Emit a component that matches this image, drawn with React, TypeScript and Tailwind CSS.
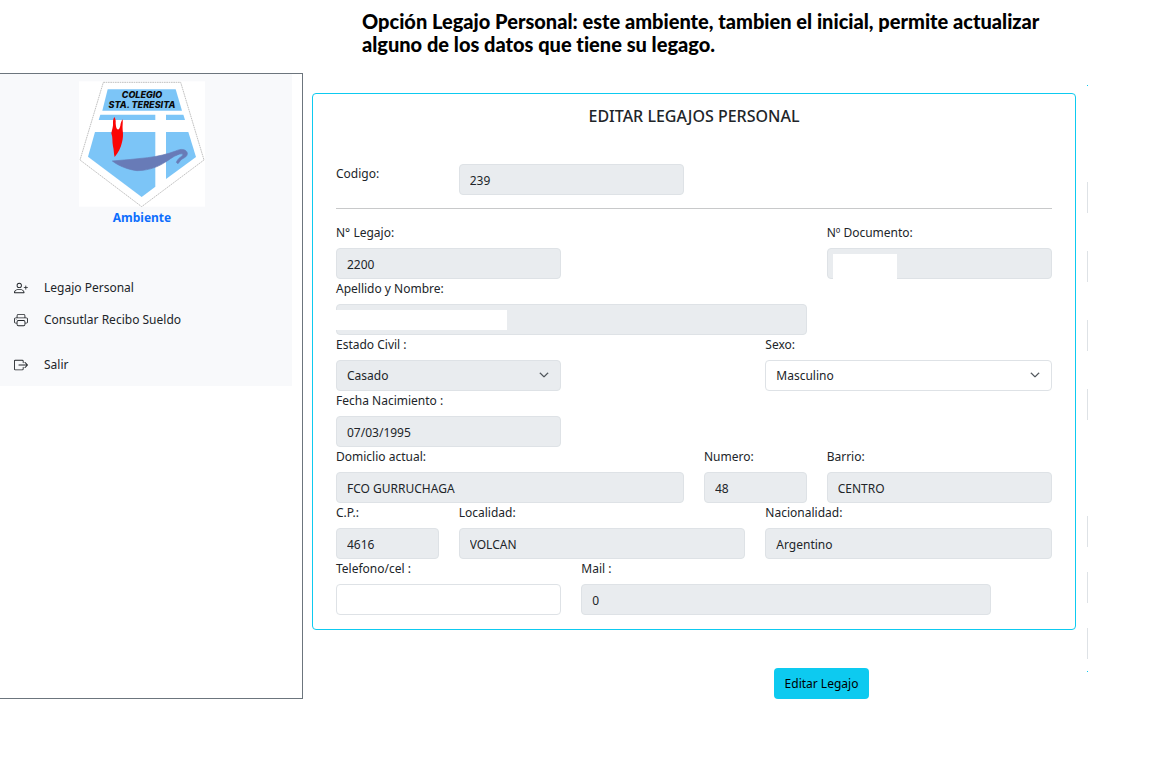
import type { ReactNode } from "react";
import { BsBoxArrowRight, BsChevronDown, BsPersonPlus, BsPrinter } from "react-icons/bs";

const boxClass = "block h-[31px] w-full appearance-none rounded border border-[#dee2e6] px-2.5 pt-px text-[#212529] outline-none";

function Logo() {
    return (
        <svg viewBox="27 34 378 376" className="h-[126px] w-[126px]" role="img" aria-label="Colegio Sta. Teresita">
            <rect x="27" y="34" width="378" height="376" fill="#fff" />
            <path d="M100 37H332L402 270L215 410L30 270Z" fill="#fff" stroke="#b5b5b5" strokeWidth="2.5" strokeDasharray="5 2" />
            <g fill="#7cc5f7">
                <path d="M113 58H317L336 122H97Z" />
                <path d="M91 134H256V150H86Z" />
                <path d="M288 134H340L345 150H288Z" />
                <path d="M75 186H256V350L215 381L54 260Z" />
                <path d="M288 186H355L378 261L288 327Z" />
            </g>
            <path d="M133 141C136 146 138 152 137 160C138 168 138 174 142 178C147 180 149 174 151 167C152 160 154 153 158 148C159 158 157 168 158 180C160 193 159 207 156 217C153 234 144 249 134 261C131 252 132 239 129 229C126 215 129 203 124 190C126 177 130 170 129 158C129 151 130 146 133 141Z" fill="#fb0505" />
            <path d="M127 273C163 270 198 267 233 263C264 259 291 253 317 243C332 236 348 236 352 249C353 263 337 264 331 272L324 281L319 277C323 267 329 263 337 257C342 251 333 250 324 254C309 259 297 270 280 280C256 295 225 302 201 302C175 299 146 288 127 273Z" fill="#687bb7" stroke="#687bb7" strokeWidth="2" />
            <g fill="#0a0a0a" className="font-['Inter',sans-serif] font-extrabold italic" textAnchor="middle" fontSize="27">
                <text x="216" y="84">COLEGIO</text>
                <text x="216" y="115">STA. TERESITA</text>
            </g>
        </svg>
    );
}

function MenuLink({ icon, children }: { icon: ReactNode; children: ReactNode }) {
    return (
        <a href="#" className="flex h-8 items-center gap-4 pl-3.5 text-[#212529]">
            {icon}
            {children}
        </a>
    );
}

type FieldProps = {
    id: string;
    label: string;
    className: string;
    value?: string;
    editable?: boolean;
    cover?: ReactNode;
};

function Field({ id, label, className, value = "", editable = false, cover }: FieldProps) {
    return (
        <div className={className}>
            <label htmlFor={id} className="block h-[25px] leading-5">{label}</label>
            <div className="relative">
                <input
                    id={id}
                    type="text"
                    defaultValue={value}
                    readOnly={!editable}
                    className={`${boxClass} ${editable ? "bg-white" : "bg-[#e9ecef]"}`}
                />
                {cover}
            </div>
        </div>
    );
}

function SelectField({ id, label, className, value, editable = false }: FieldProps) {
    return (
        <div className={className}>
            <label htmlFor={id} className="block h-[25px] leading-5">{label}</label>
            <div className="relative">
                <select
                    id={id}
                    disabled={!editable}
                    className={`${boxClass} opacity-100 ${editable ? "bg-white" : "bg-[#e9ecef]"}`}
                >
                    <option>{value}</option>
                </select>
                <BsChevronDown className="pointer-events-none absolute top-2.5 right-3 h-2.5 w-2.5 stroke-1 text-[#343a40]" />
            </div>
        </div>
    );
}

export default function App() {
    return (
        <div className="min-h-screen bg-white pb-16 font-['Noto_Sans','Open_Sans',sans-serif] text-[12px] text-[#212529]">
            <header className="h-[73px] pt-2.5 pl-[362px]">
                <p className="max-w-[700px] font-['Lato',sans-serif] text-[20px] leading-[23px] font-black text-black [font-variant-ligatures:none]">
                    Opción Legajo Personal: este ambiente, tambien el inicial, permite actualizar alguno de los datos que tiene su legago.
                </p>
            </header>

            <div className="flex items-stretch">
                <aside className="w-[303px] shrink-0 border-y border-r border-[#6c757d]">
                    <div className="mr-2.5 bg-[#f8f9fb] pt-[7px] pb-[5px]">
                        <div className="flex flex-col items-center pr-2">
                            <Logo />
                            <h2 className="pt-px leading-5 font-bold text-[#0d6efd]">Ambiente</h2>
                        </div>
                        <nav className="pt-11">
                            <MenuLink icon={<BsPersonPlus className="h-3.5 w-3.5" />}>Legajo Personal</MenuLink>
                            <MenuLink icon={<BsPrinter className="h-3.5 w-3.5" />}>Consutlar Recibo Sueldo</MenuLink>
                            <div className="pt-[13px]">
                                <MenuLink icon={<BsBoxArrowRight className="h-3.5 w-3.5" />}>Salir</MenuLink>
                            </div>
                        </nav>
                    </div>
                </aside>

                <main className="flex flex-1 pt-3 pr-[82px] pl-[9px]">
                    <form className="flex-1 pt-2" onSubmit={(e) => e.preventDefault()}>
                        <section className="rounded border border-[#0dcaf0] px-[23px] pt-3 pb-3.5">
                            <h1 className="text-center text-[16px] leading-5 font-medium">EDITAR LEGAJOS PERSONAL</h1>

                            <div className="mt-[38px] grid grid-cols-12 gap-x-5">
                                <label htmlFor="codigo" className="col-span-2 leading-5">Codigo:</label>
                                <input id="codigo" type="text" readOnly defaultValue="239" className={`${boxClass} col-span-4 bg-[#e9ecef]`} />
                            </div>

                            <hr className="mt-[13px] mb-3.5 border-[#c8c9ca]" />

                            <div className="grid grid-cols-12 gap-x-5">
                                <Field id="legajo" label="N° Legajo:" value="2200" className="col-span-4" />
                                <Field
                                    id="documento"
                                    label="Nº Documento:"
                                    className="col-span-4 col-start-9"
                                    cover={<span className="absolute top-1.5 bottom-0 left-1.5 w-16 bg-white" />}
                                />
                                <Field
                                    id="nombre"
                                    label="Apellido y Nombre:"
                                    className="col-span-8 col-start-1"
                                    cover={<span className="absolute top-1.5 left-0 h-5 w-[171px] bg-white" />}
                                />
                                <SelectField id="estado" label="Estado Civil :" value="Casado" className="col-span-4 col-start-1" />
                                <SelectField id="sexo" label="Sexo:" value="Masculino" editable className="col-span-5 col-start-8" />
                                <Field id="nacimiento" label="Fecha Nacimiento :" value="07/03/1995" className="col-span-4 col-start-1" />
                                <Field id="domicilio" label="Domiclio actual:" value="FCO GURRUCHAGA" className="col-span-6 col-start-1" />
                                <Field id="numero" label="Numero:" value="48" className="col-span-2" />
                                <Field id="barrio" label="Barrio:" value="CENTRO" className="col-span-4" />
                                <Field id="cp" label="C.P.:" value="4616" className="col-span-2" />
                                <Field id="localidad" label="Localidad:" value="VOLCAN" className="col-span-5" />
                                <Field id="nacionalidad" label="Nacionalidad:" value="Argentino" className="col-span-5" />
                                <Field id="telefono" label="Telefono/cel :" editable className="col-span-4" />
                                <Field id="mail" label="Mail :" value="0" className="col-span-7" />
                            </div>
                        </section>

                        <div className="flex justify-end pt-[38px] pr-[207px]">
                            <button type="submit" className="h-[31px] w-[95px] rounded bg-[#0dcaf0] pt-px text-black">
                                Editar Legajo
                            </button>
                        </div>
                    </form>

                    {/* edge of the neighbouring panel */}
                    <div className="ml-[11px] flex w-px flex-col" aria-hidden="true">
                        <span className="h-px bg-[#0dcaf0]" />
                        <span className="mt-24 h-[31px] bg-[#dee2e6]" />
                        <span className="mt-[38px] h-[31px] bg-[#dee2e6]" />
                        <span className="mt-[38px] h-[31px] bg-[#dee2e6]" />
                        <span className="mt-[38px] h-[31px] bg-[#dee2e6]" />
                        <span className="mt-24 h-[31px] bg-[#dee2e6]" />
                        <span className="mt-[25px] h-[31px] bg-[#dee2e6]" />
                        <span className="mt-[25px] h-[31px] bg-[#dee2e6]" />
                        <span className="mt-3 h-px bg-[#0dcaf0]" />
                    </div>
                </main>
            </div>
        </div>
    );
}
